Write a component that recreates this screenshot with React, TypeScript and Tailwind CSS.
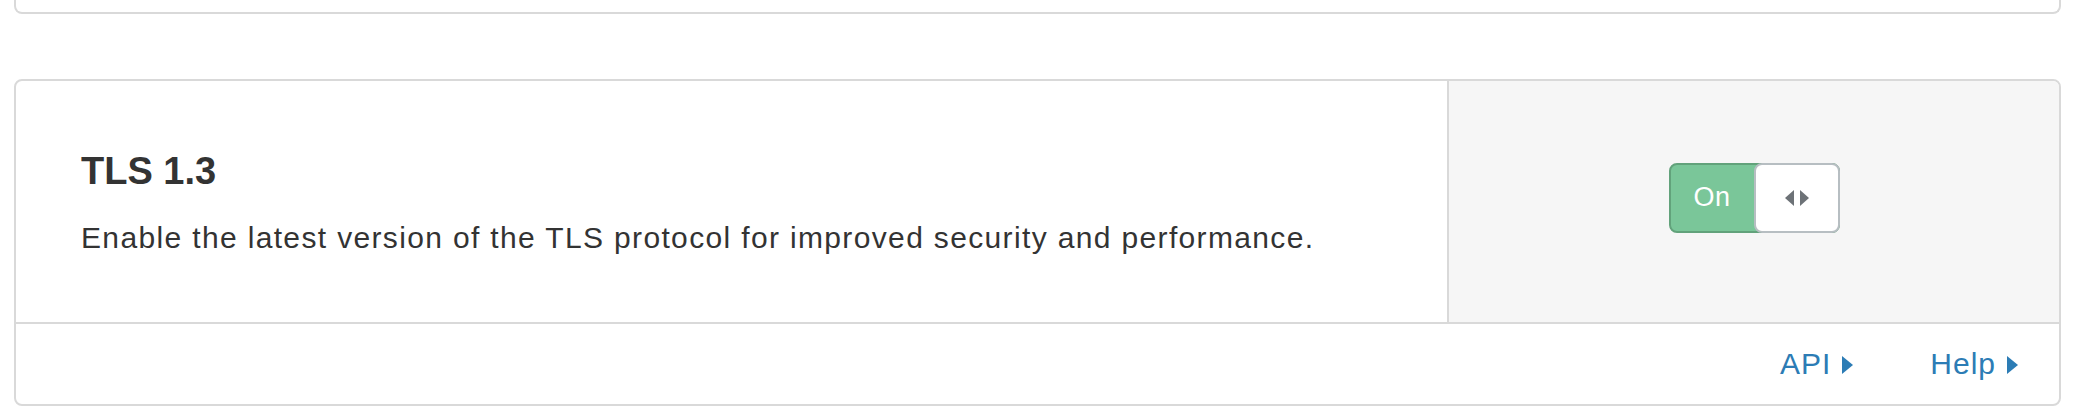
const ArrowsIcon = () => (
  <svg width="24" height="16" viewBox="0 0 24 16" fill="#6d7277">
    <path d="M9 0 L9 16 L0 8 Z" />
    <path d="M15 0 L15 16 L24 8 Z" />
  </svg>
);

const Caret = () => (
  <svg width="11" height="18" viewBox="0 0 11 18" fill="#2c7cb5" className="ml-[11px] mt-[2px]">
    <path d="M0 0 L11 9 L0 18 Z" />
  </svg>
);

const Toggle = () => {
  return (
    <div className="flex w-[171px] h-[70px] rounded-[8px] bg-[#7ac699] border-2 border-[#62a27b]">
      <span className="flex-1 flex items-center justify-center text-white text-[27px] tracking-[0.5px]">On</span>
      <span className="w-[86px] -my-[2px] -mr-[2px] bg-white border-2 border-[#b7bec2] rounded-[8px] flex items-center justify-center">
        <ArrowsIcon />
      </span>
    </div>
  );
};

const App = () => {
  return (
    <div className="w-[2074px] h-[414px] bg-white font-['Liberation_Sans',Arial,sans-serif] text-[#333]">
      <div className="ml-[14px] w-[2047px] h-[14px] border-x-2 border-b-2 border-[#d9d9d9] rounded-b-[8px]" />
      <div className="ml-[14px] mt-[65px] w-[2047px] border-2 border-[#d9d9d9] rounded-[8px] overflow-hidden">
        <div className="flex h-[243px] border-b-2 border-[#d9d9d9]">
          <div className="flex-1 pl-[65px] pt-[68px]">
            <h3 className="text-[38px] leading-[44px] font-semibold">TLS 1.3</h3>
            <p className="mt-[27px] text-[30px] leading-[36px] tracking-[1.35px]">
              Enable the latest version of the TLS protocol for improved security and performance.
            </p>
          </div>
          <div className="w-[612px] bg-[#f6f6f6] border-l-2 border-[#d9d9d9] flex items-center justify-center pb-[8px]">
            <Toggle />
          </div>
        </div>
        <div className="h-[80px] flex items-center justify-end pr-[41px] text-[30px] leading-[36px] tracking-[1px] text-[#2c7cb5]">
          <a className="flex items-center">
            API
            <Caret />
          </a>
          <a className="flex items-center ml-[77px]">
            Help
            <Caret />
          </a>
        </div>
      </div>
    </div>
  );
};

export default App;
